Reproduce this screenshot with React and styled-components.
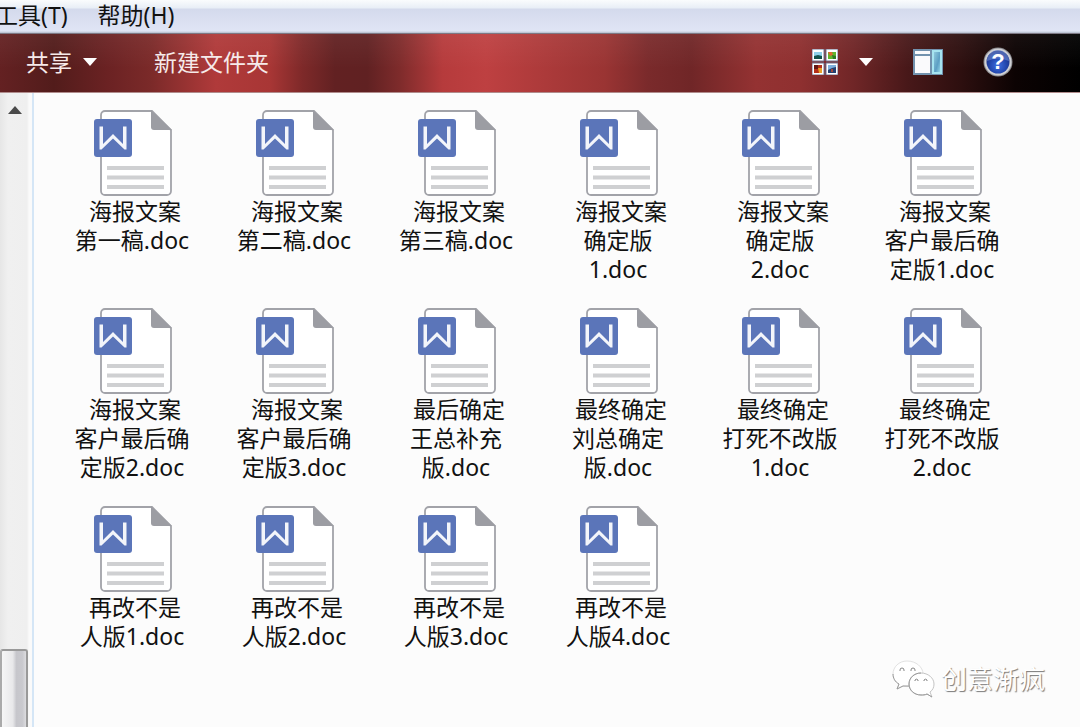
import React from 'react'
import styled, { createGlobalStyle } from 'styled-components'

const GlobalStyle = createGlobalStyle`
  * {
    box-sizing: border-box;
  }
  body {
    margin: 0;
    background: #fcfcfc;
    font-family: "Noto Sans", "Noto Sans CJK SC", sans-serif;
    font-size: 23px;
    color: #111;
  }
  button {
    border: none;
    padding: 0;
    background: none;
    font: inherit;
    color: inherit;
    cursor: pointer;
  }
`
const Window = styled.div`
  position: relative;
  min-height: 100vh;
  display: flex;
  flex-direction: column;
  overflow: hidden;
`
const MenuBar = styled.nav`
  height: 34px;
  display: flex;
  align-items: center;
  gap: 30px;
  margin-left: -5px;
  padding-bottom: 3px;
  border-bottom: 1px solid #7d7884;
  background: linear-gradient(#fafcfd 0, #e8eef6 8px, #d4daec 9px, #e0e5f5 31px, #b4bccb 33px);
`
const MenuItem = styled.button`
  line-height: 28px;
  white-space: nowrap;
`
const Toolbar = styled.header`
  height: 59px;
  display: flex;
  align-items: center;
  padding: 0 67px 2px 26px;
  border-bottom: 1px solid #b08c8c;
  color: #f6eaea;
  background:
    linear-gradient(rgba(255, 255, 255, 0.05), transparent 60%),
    linear-gradient(
      90deg,
      #642122 0,
      #521c1b 5%,
      #6b2223 10%,
      #7b2a29 14%,
      #b03a3a 20%,
      #a83635 25%,
      #7e2929 28%,
      #622122 31%,
      #602122 34%,
      #7e2b2b 37%,
      #b63b3c 41%,
      #be4041 45%,
      #9a3433 56%,
      #7a2a2b 60%,
      #702627 64%,
      #943232 70%,
      #8f3030 74%,
      #702627 79%,
      #481819 84%,
      #2d0f0f 89%,
      #0c0303 94%,
      #000 100%
    );
`
const ToolButton = styled.button`
  display: flex;
  align-items: center;
  gap: 11px;
  line-height: 32px;
  white-space: nowrap;
`
const ToolGroup = styled.div`
  display: flex;
  align-items: center;
  gap: ${(props) => props.$gap}px;
  margin-left: ${(props) => (props.$end ? 'auto' : '0')};
`
const Body = styled.div`
  flex: 1;
  display: flex;
`
const ScrollBar = styled.div`
  flex: 0 0 34px;
  display: flex;
  flex-direction: column;
  justify-content: space-between;
  border-right: 2px solid #d5e6f6;
  background: linear-gradient(90deg, #e6e6e6, #f0f0f0 8px, #efefef 27px, #fafafa 29px);
`
const ScrollUp = styled.button`
  width: 30px;
  height: 34px;
  display: flex;
  align-items: center;
  justify-content: center;
`
const ScrollThumb = styled.div`
  width: 28px;
  height: 78px;
  border: 2px solid #999;
  border-left-color: #aaa;
  border-bottom: none;
  border-radius: 3px 3px 0 0;
  background: linear-gradient(90deg, #f6f6f6, #e8e8ea 45%, #c6c6cb 60%, #c9c9ce 85%, #dcdcdf);
`
const Files = styled.ul`
  flex: 1;
  display: grid;
  grid-template-columns: repeat(auto-fill, 162px);
  align-content: start;
  row-gap: 24px;
  margin: 0;
  padding: 17px 0 17px 17px;
  list-style: none;
`
const File = styled.li`
  display: flex;
  flex-direction: column;
  align-items: center;
  gap: 1px;
`
const FileName = styled.span`
  line-height: 29px;
  text-align: center;
  white-space: pre;
`
const Watermark = styled.div`
  position: absolute;
  right: 35px;
  bottom: 29px;
  display: flex;
  align-items: center;
  gap: 6px;
  font-size: 26px;
  line-height: 38px;
  color: #fff;
  text-shadow: 1px 1px 1px #777;
`

const Caret = () => (
  <svg width="14" height="8" viewBox="0 0 14 8" aria-hidden="true">
    <path d="M0 0h14L7 8z" fill="#fff" />
  </svg>
)

const ViewsIcon = () => (
  <svg width="26" height="26" viewBox="0 0 26 26" aria-hidden="true">
    <path d="M0 0h12v12H0zM14 0h12v12H14zM0 14h12v12H0zM14 14h12v12H14z" fill="#fff" stroke="#6d7694" strokeWidth="1" />
    <path d="M2 3h8v7H2z" fill="#8ed0ea" />
    <path d="M2 7l4-1 4 1v3H2z" fill="#12524c" />
    <path d="M16 3h8v7h-8z" fill="#61b52c" />
    <path d="M16 3h4l1 3-3 1z" fill="#e0662e" />
    <path d="M20 6l4 1v3h-3z" fill="#2f7a22" />
    <path d="M2 16h8v8H2z" fill="#b3301a" />
    <path d="M6 19h4v5H7z" fill="#e9a12b" />
    <path d="M2 16h4v4H2z" fill="#641712" />
    <path d="M16 16h8v8h-8z" fill="#7fb0dc" />
    <path d="M16 21l4-2 4-1v6h-8z" fill="#23406f" />
    <path d="M19 20h2v3h-2z" fill="#a44a3d" />
  </svg>
)

const PreviewIcon = () => (
  <svg width="30" height="26" viewBox="0 0 30 26" aria-hidden="true">
    <defs>
      <linearGradient id="pane" x1="0" y1="0" x2="1" y2="1">
        <stop offset="0" stopColor="#8fc9dc" />
        <stop offset="0.6" stopColor="#5c9fc4" />
        <stop offset="1" stopColor="#8fd2e6" />
      </linearGradient>
    </defs>
    <path d="M0 0h30v26H0z" fill="#7292ae" />
    <path d="M2 2h15v3H2zM2 7h15v17H2z" fill="#fafafc" />
    <path d="M19 1h10v24H19z" fill="#a6e4f0" />
    <path d="M21 3h6v20h-6z" fill="url(#pane)" />
  </svg>
)

const HelpIcon = () => (
  <svg width="30" height="30" viewBox="0 0 30 30" aria-hidden="true">
    <defs>
      <radialGradient id="help" cx="0.5" cy="0.65" r="0.6">
        <stop offset="0" stopColor="#3f6fe0" />
        <stop offset="0.6" stopColor="#2347ae" />
        <stop offset="1" stopColor="#1c3182" />
      </radialGradient>
    </defs>
    <circle cx="15" cy="15" r="14.5" fill="#8c8c90" />
    <circle cx="15" cy="15" r="13.5" fill="#cfd0d4" />
    <circle cx="15" cy="15" r="11.5" fill="url(#help)" />
    <path d="M4 14a11 11 0 0 1 22 0q-11-5-22 0z" fill="#7c98dc" opacity="0.5" />
    <text x="15" y="22" textAnchor="middle" fontFamily="Liberation Sans" fontSize="22" fontWeight="700" fill="#fff">
      ?
    </text>
  </svg>
)

const DocIcon = () => (
  <svg width="80" height="86" viewBox="-2 0 80 86" aria-hidden="true">
    <path d="M11 1h47l19 19v61a4 4 0 0 1-4 4H11a4 4 0 0 1-4-4V5a4 4 0 0 1 4-4z" fill="#fff" stroke="#a2a3a9" strokeWidth="1.8" />
    <path d="M57 0l21 20H60a3 3 0 0 1-3-3z" fill="#9c9da3" />
    <path d="M13 58h57M13 67.500h57M13 77h57" stroke="#cfd0d2" strokeWidth="4" />
    <rect y="9" width="38" height="38" rx="3" fill="#5b75b9" />
    <path d="M5.500 16.500h3.500v17.500l10-10 10 10V16.500h3.500v23h-2L19 28.500l-11.500 11h-2z" fill="#f3f5fa" />
  </svg>
)

const WeChatIcon = () => (
  <svg width="43" height="38" viewBox="0 0 43 38" aria-hidden="true">
    <g fill="#fff" stroke="#9a9a9a" strokeWidth="1">
      <path d="M15 1C7 1 1 7 1 14c0 4 2 8 6 10l-2 5 6-3c8 2 20-1 20-12C31 7 24 1 15 1z" stroke="#e2e2e2" />
      <path d="M1 14c0 4 2 8 6 10l-2 5 6-3h6" fill="none" />
      <path d="M29 13c-7 0-12 5-12 11s5 11 12 11c2 0 4 0 6-1l5 3-2-5c3-2 4-5 4-8 0-6-6-11-13-11z" stroke="#c4c4c4" />
      <path d="M29 13c-7 0-12 5-12 11s5 11 12 11c2 0 4 0 6-1l5 3" fill="none" />
    </g>
    <g fill="none" stroke="#858585" strokeWidth="1">
      <path d="M8 11v-1a2 2 0 0 1 4 0v1M19 11v-1a2 2 0 0 1 4 0v1M23 21v-1a2 2 0 0 1 3 0v1M32 21v-1a2 2 0 0 1 3 0v1" />
    </g>
  </svg>
)

const files = [
  ['海报文案', '第一稿.doc'],
  ['海报文案', '第二稿.doc'],
  ['海报文案', '第三稿.doc'],
  ['海报文案', '确定版\n1.doc'],
  ['海报文案', '确定版\n2.doc'],
  ['海报文案', '客户最后确\n定版1.doc'],
  ['海报文案', '客户最后确\n定版2.doc'],
  ['海报文案', '客户最后确\n定版3.doc'],
  ['最后确定', '王总补充\n版.doc'],
  ['最终确定', '刘总确定\n版.doc'],
  ['最终确定', '打死不改版\n1.doc'],
  ['最终确定', '打死不改版\n2.doc'],
  ['再改不是', '人版1.doc'],
  ['再改不是', '人版2.doc'],
  ['再改不是', '人版3.doc'],
  ['再改不是', '人版4.doc'],
]

function App() {
  return (
    <Window>
      <GlobalStyle />
      <MenuBar>
        <MenuItem>工具(T)</MenuItem>
        <MenuItem>帮助(H)</MenuItem>
      </MenuBar>
      <Toolbar>
        <ToolGroup $gap={57}>
          <ToolButton>
            共享
            <Caret />
          </ToolButton>
          <ToolButton>新建文件夹</ToolButton>
        </ToolGroup>
        <ToolGroup $gap={40} $end>
          <ToolGroup $gap={21}>
            <ToolButton aria-label="视图">
              <ViewsIcon />
            </ToolButton>
            <ToolButton aria-label="更多选项">
              <Caret />
            </ToolButton>
          </ToolGroup>
          <ToolButton aria-label="预览窗格">
            <PreviewIcon />
          </ToolButton>
          <ToolButton aria-label="获取帮助">
            <HelpIcon />
          </ToolButton>
        </ToolGroup>
      </Toolbar>
      <Body>
        <ScrollBar>
          <ScrollUp aria-label="向上滚动">
            <svg width="14" height="8" viewBox="0 0 14 8" aria-hidden="true">
              <path d="M0 8h14L7 0z" fill="#4a4a4a" />
            </svg>
          </ScrollUp>
          <ScrollThumb />
        </ScrollBar>
        <Files>
          {files.map(([first, rest]) => (
            <File key={first + rest}>
              <DocIcon />
              <FileName>{` ${first}\n${rest}`}</FileName>
            </File>
          ))}
        </Files>
      </Body>
      <Watermark>
        <WeChatIcon />
        创意渐疯
      </Watermark>
    </Window>
  )
}

export default App
